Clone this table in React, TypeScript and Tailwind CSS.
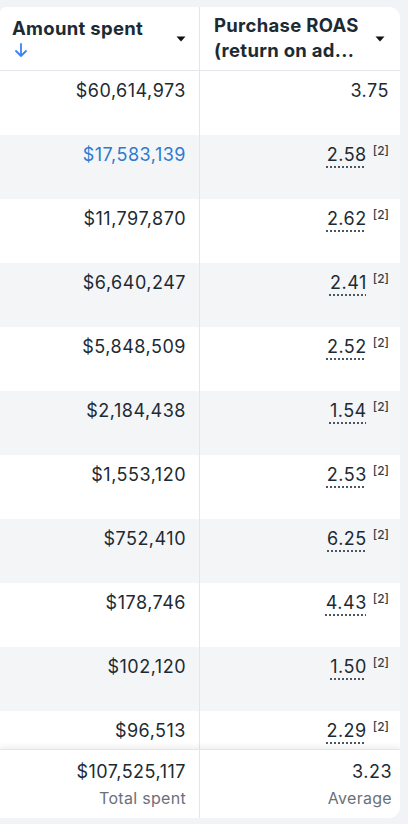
const rows = [
  { spent: "$60,614,973", roas: "3.75", note: false },
  { spent: "$17,583,139", roas: "2.58", note: true, link: true },
  { spent: "$11,797,870", roas: "2.62", note: true },
  { spent: "$6,640,247", roas: "2.41", note: true },
  { spent: "$5,848,509", roas: "2.52", note: true },
  { spent: "$2,184,438", roas: "1.54", note: true },
  { spent: "$1,553,120", roas: "2.53", note: true },
  { spent: "$752,410", roas: "6.25", note: true },
  { spent: "$178,746", roas: "4.43", note: true },
  { spent: "$102,120", roas: "1.50", note: true },
  { spent: "$96,513", roas: "2.29", note: true },
];

function Caret() {
  return (
    <svg width="10" height="6" viewBox="0 0 10 6" className="shrink-0">
      <path d="M0.5 0.5h9L5 5.5z" fill="#111" />
    </svg>
  );
}

export default function App() {
  return (
    <div
      className="h-[824px] bg-[#f1f3f7] pt-[7px] pr-2 pb-[6px] text-[#1c2b33]"
      style={{ fontFamily: "Inter, 'Noto Sans', sans-serif" }}
    >
      <div className="flex h-full w-[400px] flex-col overflow-hidden rounded-r-[11px] rounded-tl-[6px] bg-white">
        {/* Header */}
        <div className="flex h-[64px] shrink-0 border-b border-[#e4e6eb]">
          <div className="flex w-[200px] items-center justify-between border-r border-[#e4e6eb] pl-3 pr-[13px]">
            <div className="-mt-[4px] text-[18.5px] font-bold leading-[25px] tracking-[0.3px]">
              <div>Amount spent</div>
              <svg width="14" height="16" viewBox="0 0 14 16" className="ml-[2px] mt-[1px]">
                <path d="M7 2v12M2 9l5 5 5-5" stroke="#3b82f6" strokeWidth="1.8" fill="none" strokeLinecap="round" strokeLinejoin="round" />
              </svg>
            </div>
            <Caret />
          </div>
          <div className="flex w-[200px] items-center justify-between pl-[14px] pr-[15px]">
            <div className="-mt-[1px] text-[18.5px] font-bold leading-[25px] tracking-[0.3px]">
              <div>Purchase ROAS</div>
              <div>(return on ad...</div>
            </div>
            <Caret />
          </div>
        </div>

        {/* Body */}
        <div className="flex-1 overflow-hidden">
          {rows.map((r, i) => (
            <div key={i} className={`flex h-[64px] ${i % 2 === 1 ? "bg-[#f4f5f7]" : "bg-white"}`}>
              <div
                className={`w-[200px] border-r border-[#e4e6eb] pr-[13px] pt-[8px] text-right text-[18px] leading-[24px] tracking-[0.5px] ${
                  r.link ? "text-[#2d7bd1]" : ""
                }`}
              >
                {r.spent}
              </div>
              <div className="w-[200px] pr-[11px] pt-[8px] text-right text-[18px] leading-[24px] tracking-[0.5px]">
                {r.note ? (
                  <>
                    <span className="underline decoration-[#4b5563] decoration-dotted decoration-[1.5px] underline-offset-[5px]">{r.roas}</span>
                    <sup className="ml-[6px] text-[12px] font-medium tracking-normal text-[#3a3f45]">[2]</sup>
                  </>
                ) : (
                  <span>{r.roas}</span>
                )}
              </div>
            </div>
          ))}
        </div>

        {/* Footer */}
        <div className="relative flex h-[69px] shrink-0 border-t border-[#e4e6eb] shadow-[0_-3px_5px_rgba(0,0,0,0.06)]">
          <div className="w-[200px] border-r border-[#e4e6eb] pr-[13px] pt-[10px] text-right">
            <div className="text-[18px] leading-[24px] tracking-[0.5px]">$107,525,117</div>
            <div className="mt-[3px] text-[16px] leading-[22px] tracking-[0.3px] text-[#6b7079]">Total spent</div>
          </div>
          <div className="w-[200px] pr-[8px] pt-[10px] text-right">
            <div className="text-[18px] leading-[24px] tracking-[0.5px]">3.23</div>
            <div className="mt-[3px] text-[16px] leading-[22px] tracking-[0.3px] text-[#6b7079]">Average</div>
          </div>
        </div>
      </div>
    </div>
  );
}
